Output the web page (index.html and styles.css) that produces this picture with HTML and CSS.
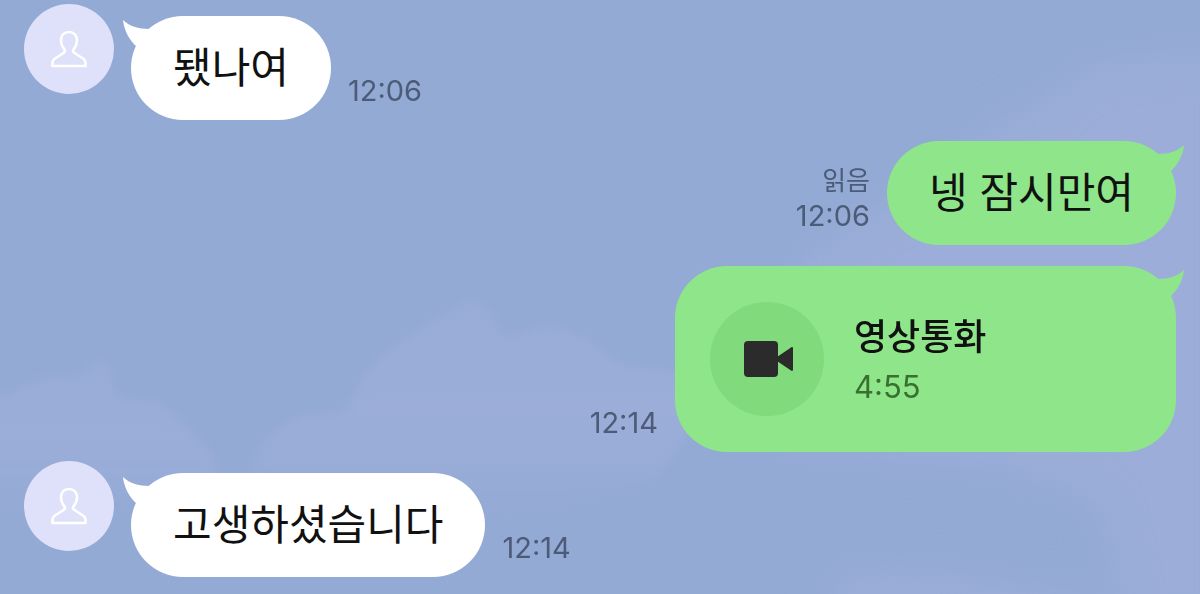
FILE: index.html
```html
<!DOCTYPE html>
<html lang="ko">
<head>
  <meta charset="UTF-8">
  <meta name="viewport" content="width=device-width, initial-scale=1.0">
  <title>Chat</title>
  <link rel="stylesheet" href="styles.css">
</head>
<body>
  <!-- shared shapes -->
  <svg class="defs" aria-hidden="true">
    <symbol id="person" viewBox="0 0 36 38">
      <path d="M18 2C13 2 10 5.500 10 10.500C10 14.500 11.500 17 13.500 19.500C14.500 21 14 22 12.500 23L4 28.500C2.500 29.500 1.500 31 1.500 33V36H34.500V33C34.500 31 33.500 29.500 32 28.500L23.500 23C22 22 21.500 21 22.500 19.500C24.500 17 26 14.500 26 10.500C26 5.500 23 2 18 2Z" fill="none" stroke="#fff" stroke-width="2.600"/>
    </symbol>
    <symbol id="tail" viewBox="0 0 40 40">
      <path d="M0 0C6 6 15 9 27 9L40 20L28 36L14 27C6 20 1 10 0 0Z" fill="currentColor"/>
    </symbol>
  </svg>

  <svg class="sky" viewBox="0 0 1200 594" preserveAspectRatio="none" aria-hidden="true">
    <defs>
      <filter id="soft" x="-10%" y="-10%" width="120%" height="120%" color-interpolation-filters="sRGB">
        <feGaussianBlur stdDeviation="6"/>
      </filter>
      <filter id="haze" x="-20%" y="-20%" width="140%" height="140%" color-interpolation-filters="sRGB">
        <feGaussianBlur stdDeviation="20"/>
      </filter>
      <linearGradient id="fade" x1="0" y1="0" x2="0" y2="1">
        <stop offset="0" stop-color="#9caed8" stop-opacity="0.5"/>
        <stop offset="0.5" stop-color="#9caed8" stop-opacity="0.9"/>
        <stop offset="1" stop-color="#9caed8" stop-opacity="0"/>
      </linearGradient>
    </defs>
    <g fill="url(#fade)" filter="url(#soft)">
      <path d="M-20 405L20 388L40 378L84 372L98 358L112 364L116 396L160 402L184 424L215 458L235 520L-20 520Z"/>
      <path d="M235 500L262 440L300 416L346 412L362 380L380 356L420 328L450 308L476 296L494 312L504 338L550 322L590 340L620 364L720 380L660 480L500 530H235Z"/>
    </g>
    <g fill="#9caed8" fill-opacity="0.85" filter="url(#haze)">
      <path d="M760 310L830 240L950 170L990 130L1050 100L1080 70L1130 60L1240 50V640H1130L1100 500L1000 465L760 440Z"/>
      <path d="M820 620L850 570L930 575L1100 600V640H820Z"/>
    </g>
  </svg>

  <main class="chat">
    <div class="message received">
      <div class="avatar"><svg><use href="#person"/></svg></div>
      <div class="bubble">
        <svg class="tail"><use href="#tail"/></svg>
        <p>됐나여</p>
      </div>
      <div class="meta"><time>12:06</time></div>
    </div>

    <div class="message sent">
      <div class="bubble">
        <svg class="tail"><use href="#tail"/></svg>
        <p>넹 잠시만여</p>
      </div>
      <div class="meta">
        <span class="read">읽음</span>
        <time>12:06</time>
      </div>
    </div>

    <div class="message sent">
      <div class="bubble call">
        <svg class="tail"><use href="#tail"/></svg>
        <div class="call-icon">
          <svg viewBox="-3 0 52 36">
            <rect width="34" height="36" rx="4"/>
            <path d="M33 16L47 6.500C48 5.800 49 6 49 7.500V28.500C49 30 48 30.200 47 29.500L33 20Z"/>
          </svg>
        </div>
        <div class="call-info">
          <p class="call-title">영상통화</p>
          <p class="call-length">4:55</p>
        </div>
      </div>
      <div class="meta"><time>12:14</time></div>
    </div>

    <div class="message received">
      <div class="avatar"><svg><use href="#person"/></svg></div>
      <div class="bubble">
        <svg class="tail"><use href="#tail"/></svg>
        <p>고생하셨습니다</p>
      </div>
      <div class="meta"><time>12:14</time></div>
    </div>
  </main>
</body>
</html>
```

FILE: styles.css
```css
* {
  margin: 0;
  padding: 0;
  box-sizing: border-box;
}

body {
  min-height: 100vh;
  background-color: #93aad5;
  font-family: Inter, "Noto Sans CJK KR", sans-serif;
  color: #111;
}

.defs {
  position: absolute;
  width: 0;
  height: 0;
}

.sky {
  position: fixed;
  inset: 0;
  width: 100%;
  height: 100%;
  z-index: -1;
}

.chat {
  display: flex;
  flex-direction: column;
  gap: 21px;
  padding: 16px 24px;
}

.message {
  display: flex;
  align-items: flex-end;
  gap: 17px;
}

.message.sent {
  flex-direction: row-reverse;
}

.avatar {
  display: flex;
  align-items: center;
  justify-content: center;
  align-self: flex-start;
  width: 90px;
  height: 90px;
  margin-top: -12px;
  border-radius: 50%;
  background-color: #dfe0f9;
}

.avatar svg {
  width: 36px;
  height: 38px;
}

.bubble {
  position: relative;
  padding: 20px 42px;
  border-radius: 52px;
  background-color: #fff;
  color: #fff;
  font-size: 42px;
  line-height: 64px;
}

.bubble p {
  color: #111;
}

.sent .bubble {
  background-color: #8fe589;
  color: #8fe589;
}

.tail {
  position: absolute;
  top: 4px;
  left: -8px;
  width: 40px;
  height: 40px;
}

.sent .tail {
  left: auto;
  right: -8px;
  transform: scaleX(-1);
}

.meta {
  display: flex;
  flex-direction: column;
  padding-bottom: 12px;
  font-size: 29px;
  line-height: 35px;
  color: #4c5b78;
}

.sent .meta {
  align-items: flex-end;
}

.read {
  font-size: 26px;
}

.bubble.call {
  display: flex;
  align-items: center;
  gap: 30px;
  flex: 0 1 501px;
  padding: 36px 35px;
}

.call-icon {
  display: flex;
  align-items: center;
  justify-content: center;
  width: 114px;
  height: 114px;
  border-radius: 50%;
  background-color: #81da7b;
}

.call-icon svg {
  width: 52px;
  height: 36px;
  fill: #2b2b2b;
}

.call-info {
  padding-top: 4px;
}

.call-title {
  font-size: 36px;
  font-weight: 500;
  line-height: 52px;
}

.bubble .call-length {
  font-size: 31px;
  line-height: 48px;
  color: #37702f;
}
```
